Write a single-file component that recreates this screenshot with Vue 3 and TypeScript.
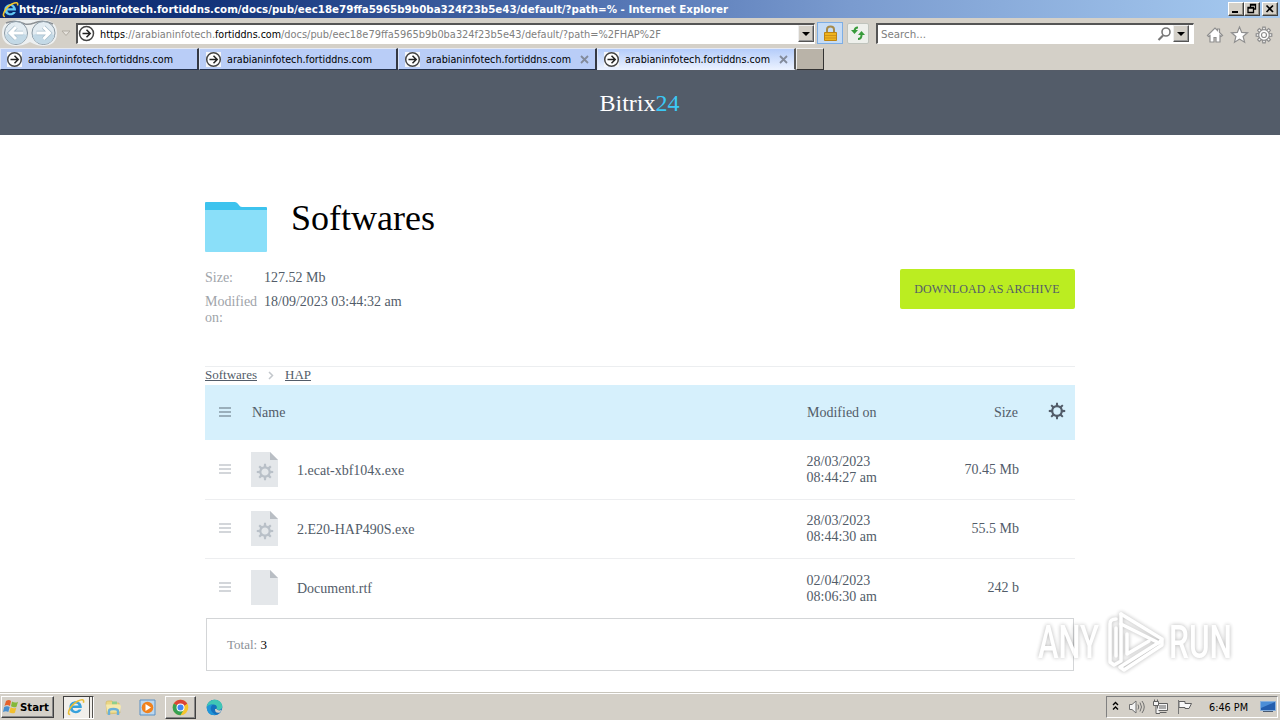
<script setup lang="ts">
import { h } from 'vue'

interface FitProps { text: string; w: number }

// A single line of text that always occupies exactly `w` pixels.
const FitText = (props: FitProps) =>
  h('svg', { width: props.w, height: 16, overflow: 'visible' }, [
    h('text', { x: 0, y: 12, textLength: props.w, lengthAdjust: 'spacingAndGlyphs', fill: 'currentColor' }, props.text),
  ])
FitText.props = ['text', 'w']

interface Tab { title: string; closable: boolean; active: boolean }
const host = 'arabianinfotech.fortiddns.com'
const tabs: Tab[] = [
  { title: host, closable: false, active: false },
  { title: host, closable: false, active: false },
  { title: host, closable: true, active: false },
  { title: host, closable: true, active: true },
]

interface FileRow { name: string; date: string; time: string; size: string; exe: boolean }
const files: FileRow[] = [
  { name: '1.ecat-xbf104x.exe', date: '28/03/2023', time: '08:44:27 am', size: '70.45 Mb', exe: true },
  { name: '2.E20-HAP490S.exe', date: '28/03/2023', time: '08:44:30 am', size: '55.5 Mb', exe: true },
  { name: 'Document.rtf', date: '02/04/2023', time: '08:06:30 am', size: '242 b', exe: false },
]
const teeth: number[] = [0, 45, 90, 135, 180, 225, 270, 315]
</script>

<template>
  <div class="screen">
    <header class="titlebar">
      <svg class="ie" width="17" height="17" viewBox="0 0 17 17">
        <path d="M14 9.400H5.400c.2 3.200 4.200 3.600 5.600 1.500h2.800c-2 5.200-11.500 4.500-11.500-2.300 0-7 12-7.800 11.700.8zM5.400 7.200h5.500c-.4-2.800-4.800-2.800-5.500 0z" fill="#62c8f5" />
        <path d="M3 15.500C-.8 16 2.500 7 10 3c4-2 6.500-2 5.500 1.500" fill="none" stroke="#f4c72d" stroke-width="1.500" />
      </svg>
      <FitText class="title" text="https://arabianinfotech.fortiddns.com/docs/pub/eec18e79ffa5965b9b0ba324f23b5e43/default/?path=% - Internet Explorer" :w="709" />
      <div class="winbtns">
        <span class="btn"><svg width="14" height="12"><path d="M3 9h6" stroke="#000" stroke-width="2" /></svg></span>
        <span class="btn"><svg width="14" height="12"><path d="M5.500 4V1.500h5V6H9M3 4.500h5.500v5H3zM5 2h6M3 5h6" fill="none" stroke="#000" stroke-width="1.300" /></svg></span>
        <span class="btn last"><svg width="14" height="12"><path d="M3.500 2.500l6.500 6.500M10 2.500L3.500 9" stroke="#000" stroke-width="1.700" /></svg></span>
      </div>
    </header>

    <div class="toolbar">
      <svg class="nav" width="72" height="30" viewBox="0 0 72 30">
        <path d="M15 2H44q13 1 13 13T44 28q-7 0-14-4-7 4-15 4Q2 27 2 15T15 2z" fill="#edf0f1" />
        <path d="M6 5q9-4 19 1 4 1 9-1 9-4 19 1" fill="none" stroke="#8d9195" stroke-width="1.500" />
        <g stroke="#8b9aa5">
          <circle cx="16" cy="15" r="11.500" fill="#e3ecf2" /><circle cx="43.500" cy="15" r="11.500" fill="#e3ecf2" />
        </g>
        <path d="M5 17q11-4 22 0-2 9-11 9T5 17zM32.500 17q11-4 22 0-2 9-11 9t-11-9z" fill="#c3d9e6" />
        <path d="M23 15H10m6-6l-6 6 6 6M36.500 15h13m-6-6l6 6-6 6" fill="none" stroke="#a9bfcd" stroke-width="4.500" />
        <path d="M23 15H10m6-6l-6 6 6 6M36.500 15h13m-6-6l6 6-6 6" fill="none" stroke="#fff" stroke-width="3" />
        <path d="M62 13h8l-4 4.500z" fill="#e5e2dc" stroke="#b1aca3" />
      </svg>
      <div class="address">
        <svg class="site" width="17" height="17" viewBox="0 0 17 17"><circle cx="8.500" cy="8.500" r="7" fill="#fff" stroke="#444" stroke-width="1.500" /><path d="M4.500 8.500h8M8.500 4.800l3.700 3.700-3.700 3.700" fill="none" stroke="#222" stroke-width="1.500" /></svg>
        <FitText class="dark" text="https" :w="25" />
        <FitText text="://arabianinfotech." :w="90" />
        <FitText class="dark" text="fortiddns.com" :w="66" />
        <FitText text="/docs/pub/eec18e79ffa5965b9b0ba324f23b5e43/default/?path=%2FHAP%2F" :w="380" />
        <span class="drop"></span>
      </div>
      <span class="tool lock">
        <svg width="15" height="17" viewBox="0 0 15 17"><path d="M4 8V4.500q0-3 3.500-3t3.500 3V8" fill="none" stroke="#a68b4b" stroke-width="2" /><path d="M1.500 7.500h12v8h-12z" fill="#efb41d" stroke="#bd8413" /><path d="M2 10.500h11M2 13h11" stroke="#cf911a" /></svg>
      </span>
      <span class="tool">
        <svg width="16" height="16" viewBox="0 0 16 16" fill="none" stroke="#389b3b" stroke-width="2"><path d="M8 2.500q-3.500 0-3.500 4" /><path d="M1 5h7L4.500 9z" fill="#389b3b" stroke="none" /><path d="M8 14q3.500 0 3.500-4" /><path d="M8 10h7l-3.500-4z" fill="#389b3b" stroke="none" /></svg>
      </span>
      <div class="search">
        <FitText text="Search..." :w="45" />
        <svg class="glass" width="15" height="16" viewBox="0 0 15 16" fill="none" stroke="#777"><circle cx="9" cy="6" r="4" stroke-width="1.600" /><path d="M6 9.500L1.500 14" stroke-width="2.200" /></svg>
        <span class="drop"></span>
      </div>
      <svg class="cmds" width="70" height="20" viewBox="0 0 70 20" fill="#fff" stroke="#8e8e8e" stroke-width="1.200">
        <path d="M1.500 10.500L9 3l2.500 2.500V4h2v3.500l3 3-1.500 1-1-1V17h-4v-4.500H8V17H4v-6.500l-1.500 1z" />
        <path d="M33.500 2l2.200 5.400 5.800.4-4.400 3.700 1.500 5.700-5.100-3.100-5 3.100 1.400-5.700-4.400-3.700 5.800-.4z" />
        <g transform="translate(58 10)">
          <path v-for="a in teeth" :key="a" :transform="`rotate(${a})`" d="M-1.500-5l.3-2.800h2.400l.3 2.800" />
          <circle r="5.300" /><circle r="2.500" />
        </g>
      </svg>
    </div>

    <nav class="tabs">
      <div v-for="(tab, i) in tabs" :key="i" class="tab" :class="{ active: tab.active }">
        <svg class="site" width="17" height="17" viewBox="0 0 17 17"><path d="M1 1h15v15H1z" fill="#f4f6fb" /><circle cx="8.500" cy="8.500" r="6.800" fill="#fff" stroke="#444" stroke-width="1.500" /><path d="M4.500 8.500h8M8.500 4.800l3.700 3.700-3.700 3.700" fill="none" stroke="#222" stroke-width="1.500" /></svg>
        <FitText :text="tab.title" :w="145" />
        <svg v-if="tab.closable" class="close" width="9" height="9"><path d="M1 1l7 7M8 1L1 8" stroke="#838b9b" stroke-width="1.800" /></svg>
      </div>
      <div class="newtab"></div>
    </nav>

    <main class="page">
      <div class="brand"><span>Bitrix</span><span class="num">24</span></div>

      <div class="content">
        <div class="heading">
          <svg width="62" height="50" viewBox="0 0 62 50"><path d="M0 1q0-1 1-1h29q2 0 3.500 2.500T37 5h24q1 0 1 1v5H0z" fill="#3dc3ee" /><path d="M0 8h62v41q0 1-1 1H1q-1 0-1-1z" fill="#8adff9" /></svg>
          <h1>Softwares</h1>
        </div>

        <div class="info">
          <dl>
            <dt>Size:</dt><dd>127.52 Mb</dd>
            <dt>Modified on:</dt><dd>18/09/2023 03:44:32 am</dd>
          </dl>
          <button class="download">DOWNLOAD AS ARCHIVE</button>
        </div>

        <div class="crumbs">
          <a>Softwares</a>
          <svg width="6" height="9"><path d="M1 1l3.500 3.500L1 8" fill="none" stroke="#c3c7cc" stroke-width="1.500" /></svg>
          <a>HAP</a>
        </div>

        <div class="row head">
          <i class="burger"></i>
          <span class="hname">Name</span>
          <span class="date">Modified on</span>
          <span class="size">Size</span>
          <svg class="gear" width="18" height="18" viewBox="-9 -9 18 18">
            <path v-for="a in teeth" :key="a" :transform="`rotate(${a})`" d="M-1.200-5l.3-3.200H.9l.3 3.200z" fill="#525c69" />
            <circle r="4.800" fill="none" stroke="#525c69" stroke-width="2.200" />
          </svg>
        </div>
        <div v-for="f in files" :key="f.name" class="row file-row">
          <i class="burger"></i>
          <svg class="file" width="27" height="35" viewBox="0 0 27 35">
            <path d="M0 0h19l8 8v27H0z" fill="#e4e7ea" /><path d="M19 0l8 8h-8z" fill="#b9bec4" />
            <g v-if="f.exe" transform="translate(14 20)">
              <path v-for="a in teeth" :key="a" :transform="`rotate(${a})`" d="M-1.300-5l.3-3.200H1l.3 3.200z" fill="#b9c0c8" />
              <circle r="4.700" fill="none" stroke="#b9c0c8" stroke-width="2.200" />
            </g>
          </svg>
          <span class="name">{{ f.name }}</span>
          <span class="date">{{ f.date }}<br />{{ f.time }}</span>
          <span class="size">{{ f.size }}</span>
        </div>
        <div class="total">Total: <b>{{ files.length }}</b></div>
      </div>

      <svg class="watermark" width="245" height="76" viewBox="0 0 245 76">
        <g fill="#fff">
          <text x="8" y="48" textLength="61" lengthAdjust="spacingAndGlyphs">ANY</text>
          <text x="139" y="48" textLength="63" lengthAdjust="spacingAndGlyphs">RUN</text>
        </g>
        <g fill="none" stroke="#fff" stroke-width="3.500" stroke-linejoin="round" stroke-linecap="round">
          <path d="M86 9q-6 0-6 5v38l4 3 7-4V4" />
          <path d="M86 18v28" />
          <path d="M91 4l41 25-3 4-38-19" />
          <path d="M97 24v20l22-13" />
          <path d="M132 30v5L94 60l-4-3 38-24" />
        </g>
      </svg>
    </main>

    <footer class="taskbar">
      <div class="start">
        <svg width="17" height="16" viewBox="0 0 17 16"><path d="M3 2q3-2 5 0L7 7Q4 5 1.500 7z" fill="#e5622b" /><path d="M9 2.500q3 2 6 .2l-1.500 5Q11 9 8 7.200z" fill="#84b83a" /><path d="M1.200 8Q4 6.500 6.700 8l-1.400 5Q3 11.500 0 13z" fill="#478fd0" /><path d="M7.700 8.300q3 1.700 5.600.4l-1.400 5q-3 1.300-5.600-.5z" fill="#f2bf2e" /></svg>
        <FitText text="Start" :w="29" />
      </div>
      <div class="pinned ieapp">
        <svg width="20" height="18" viewBox="0 0 17 17">
          <path d="M14 9.400H5.400c.2 3.200 4.200 3.600 5.600 1.500h2.800c-2 5.200-11.500 4.500-11.500-2.300 0-7 12-7.800 11.700.8zM5.400 7.200h5.500c-.4-2.800-4.800-2.800-5.500 0z" fill="#36a1dc" />
          <path d="M3 15.500C-.8 16 2.500 7 10 3c4-2 6.500-2 5.500 1.500" fill="none" stroke="#e9bd35" stroke-width="1.500" />
        </svg>
        <i></i><i></i>
      </div>
      <svg class="explorer" width="17" height="17" viewBox="0 0 17 17"><path d="M1 4q0-2 2-2h4l1 2h6l1 10-13 1z" fill="#ead685" stroke="#d1b65a" stroke-width=".6" /><path d="M7 2.500h5v3H7z" fill="#8fcf8b" /><path d="M1 5.500h14l1 2-1 5H2z" fill="#f5e9ac" /><path d="M4 16v-4q0-2 4.500-2t4.500 2v4" fill="none" stroke="#69b0d8" stroke-width="2.400" /></svg>
      <svg class="media" width="17" height="17" viewBox="0 0 17 17"><path d="M1 1h15v15H1z" fill="#bcd7ee" stroke="#5b91c5" /><circle cx="8.500" cy="8.500" r="5.800" fill="#f0821e" /><path d="M6.500 5l5.500 3.500L6.500 12z" fill="#fff" /></svg>
      <div class="pinned chrome">
        <svg width="17" height="17" viewBox="-8.500 -8.500 17 17"><circle r="7.800" fill="#f6c52c" /><path d="M0 0L-6.750-3.900A7.800 7.800 0 0 1 6.750-3.900z" fill="#db4437" /><path d="M0 0L-6.750-3.900A7.800 7.800 0 0 0 0 7.800L3.400 2z" fill="#36a152" /><path d="M-4-3.900H6.750L0 1z" fill="#db4437" /><circle r="4" fill="#fff" /><circle r="3" fill="#4285f4" /></svg>
      </div>
      <svg class="edge" width="17" height="17" viewBox="0 0 17 17"><circle cx="8.500" cy="8.500" r="7.800" fill="#1570bd" /><path d="M.8 7.500C2-1.500 16-1.500 16.300 7.500c0 4-5 4-6 2.500 1.500-2 0-4.500-3-4.500-3 0-5.500 1-6.500 3z" fill="#40c6b5" /><path d="M.7 9q1-4 6-3.500Q3 9 6 13q2 2 4 2.500Q2 18 .7 9z" fill="#2196d8" /><path d="M10.300 10q2 2.500 5.500.8L14 13.500q-5 1.500-5-3.500z" fill="#d4d0c8" /></svg>

      <div class="tray">
        <svg class="more" width="7" height="10" viewBox="0 0 7 10" fill="none" stroke="#000" stroke-width="1.400"><path d="M1 4l2.500-2.500L6 4M1 8.500L3.500 6 6 8.500" /></svg>
        <svg class="sound" width="18" height="16" viewBox="0 0 18 16" fill="none" stroke="#707070"><path d="M1.500 5.500H4L8 2v12l-4-3.500H1.500z" fill="#f4f4f4" /><path d="M10 5.500q1.500 2.500 0 5M12 3.500q3 4.500 0 9M14 2q4.500 6 0 12" /></svg>
        <svg class="net" width="17" height="16" viewBox="0 0 17 16" fill="#f4f4f4" stroke="#606060"><path d="M5.500 4.500h10v7h-10zM7.500 13.500h7" /><path d="M7 6h7v4H7z" fill="#aaa" stroke="none" /><path d="M1.500 2.500h5v4h-5zM2.500.5v2M5.500.5v2M4 6.500v8h4" /></svg>
        <svg class="flag" width="17" height="16" viewBox="0 0 17 16" fill="#f8f8f8" stroke="#606060"><path d="M3 2.500h6v2h6.500L13 9.500H9v-1H3z" /><path d="M2.500 1v14" stroke="#777" /></svg>
        <FitText class="clock" text="6:46 PM" :w="39" />
        <svg class="desk" width="16" height="14" viewBox="0 0 16 14"><path d="M.5 1.500h15v9H.5z" fill="#245eae" stroke="#86afdc" /><path d="M1 2h14L1 8z" fill="#4c8ed7" /><path d="M3 11.500h10" stroke="#4b5b71" /></svg>
      </div>
    </footer>
  </div>
</template>

<style>
html, body { margin: 0; overflow: hidden; }
</style>

<style scoped>
* { box-sizing: border-box; }
svg { display: block; flex: none; }
.screen { width: 1280px; height: 720px; overflow: hidden; display: flex; flex-direction: column; background: #fff; font: 11px "DejaVu Sans Condensed", "DejaVu Sans", sans-serif; color: #000; }
.titlebar { height: 18px; flex: none; display: flex; align-items: center; padding-left: 2px; background: linear-gradient(90deg, #0b276c 0, #14357b 220px, #5273b2 600px, #7a9bcf 850px, #a6caf0 1270px); }
.title { color: #fff; font-weight: bold; font-family: "DejaVu Sans", sans-serif; }
.winbtns { margin-left: auto; padding-right: 2px; display: flex; }
.btn { width: 16px; height: 14px; background: #d4d0c8; border: 1px solid; border-color: #fff #404040 #404040 #fff; box-shadow: inset -1px -1px #929087; }
.btn.last { margin-left: 2px; }
.toolbar { height: 30px; flex: none; display: flex; align-items: center; background: #d4d0c8; }
.address, .search { height: 21px; display: flex; align-items: center; background: #fff; border: solid #fff; border-width: 2px 1px 1px 2px; border-top-color: #555; border-left-color: #555; color: #808080; }
.address { width: 739px; margin-left: 4px; padding-left: 0; }
.address .site { margin-right: 5px; }
.address .dark { color: #000; }
.drop { width: 16px; height: 17px; margin-left: auto; display: grid; place-items: center; background: #d4d0c8; border: 1px solid; border-color: #eee #555 #555 #eee; box-shadow: inset -1px -1px #999; }
.drop::after { content: ""; border: 4px solid transparent; border-top-color: #000; border-bottom: 0; }
.tool { width: 22px; height: 21px; margin-left: 8px; display: grid; place-items: center; background: #eef0ec; border: 1px solid #c0c4bd; border-radius: 2px; }
.tool.lock { width: 26px; margin-left: 2px; height: 22px; background: #c6dcf5; border-color: #7daee5; border-radius: 0; }
.tool.lock + .tool { margin-left: 4px; }
.search { width: 318px; margin-left: 7px; padding-left: 3px; padding-right: 4px; }
.glass { margin-left: auto; margin-right: 1px; }
.search .drop { margin-left: 0; }
.cmds { margin-left: 12px; position: relative; top: 2px; }
.tabs { height: 23px; flex: none; display: flex; background: #d4d0c8; border-bottom: 1px solid #555c68; }
.tab { width: 199px; height: 22px; display: flex; align-items: center; padding-left: 5px; background: #b9cdf7; border-right: 2px solid #343842; border-top: 1px solid #e5e9f3; border-bottom: 1px solid #25324c; border-left: 1px solid #dce5f8; }
.tab .site { margin-right: 5px; }
.tab .close { margin-left: 9px; }
.tab.active { background: linear-gradient(#b4ccfa, #eaf1ff); border-bottom-color: #eaf1ff; border-right-color: #555; }
.newtab { width: 28px; height: 22px; background: #b9b3a8; border: 1px solid #eee; border-right: 1px solid #333; border-bottom: 1px solid #333; }
.page { position: relative; height: 621px; flex: none; font-family: "Liberation Serif", serif; font-size: 14px; line-height: 16px; color: #525c69; }
.brand { height: 64px; display: flex; justify-content: center; align-items: center; padding-right: 1px; background: #535c69; color: #fff; font-size: 24px; }
.brand .num { color: #3bc8f5; }
.content { width: 870px; margin-left: 205px; padding-top: 67px; }
.heading { display: flex; height: 67px; }
h1 { margin: -4px 0 0 24px; font-size: 36px; line-height: 41px; font-weight: normal; color: #000; }
.info { display: flex; justify-content: space-between; height: 97px; }
dl { margin: 0; padding-top: 1px; display: grid; grid-template-columns: 59px auto; row-gap: 8px; align-content: start; }
dt { color: #a0a4aa; }
dd { margin: 0; }
.download { width: 175px; height: 40px; border: 0; padding: 0 1px 0 0; border-radius: 2px; background: #bbed21; color: #535c69; font: 12px "Liberation Serif", serif; letter-spacing: .08px; }
.crumbs { height: 19px; border-top: 1px solid #eceef0; padding-bottom: 2px; display: flex; align-items: center; font-size: 13px; }
.crumbs a { text-decoration: underline; }
.crumbs svg { margin: 0 11px; }
.row { height: 59px; display: flex; align-items: center; padding-left: 14px; }
.file-row { height: 60px; align-items: flex-start; padding-top: 12px; border-bottom: 1px solid #edeef0; }
.file-row + .file-row { height: 59px; padding-top: 11px; }
.file-row:nth-last-child(2) { border-bottom: 0; }
.row.head { height: 55px; background: #d6f0fc; }
.burger { width: 12px; height: 10px; flex: none; border: solid #d3d6da; border-width: 2px 0; position: relative; }
.file-row .burger { margin-top: 12px; }
.burger::after { content: ""; position: absolute; left: 0; right: 0; top: 2px; height: 2px; background: #d3d6da; }
.head .burger { border-color: #9aafbb; margin-top: -1px; }
.head .burger::after { background: #9aafbb; }
.hname { margin-left: 21px; width: 555px; }
.file { margin-left: 20px; }
.name { margin-left: 19px; width: 509.500px; padding-top: 11px; }
.date { width: 90.500px; padding-top: 2px; }
.head .date { padding-top: 0; width: 90px; }
.file-row:nth-last-child(2) .date { padding-top: 3px; }
.size { width: 122px; text-align: right; }
.file-row .size { padding-top: 10px; }
.head .size { width: 121px; }
.gear { margin-left: 30px; margin-top: -3px; }
.total { width: 868px; height: 53px; margin: 0 0 0 1px; border: 1px solid #d3d5d7; padding: 18px 0 0 20px; font-size: 13px; color: #8b9097; }
.total b { font-weight: normal; color: #000; }
.watermark { position: absolute; left: 1030px; top: 539px; filter: drop-shadow(0 0 2px rgba(0, 0, 0, .32)); opacity: .9; font: 500 47px Roboto, sans-serif; }
.taskbar { height: 28px; flex: none; display: flex; align-items: center; background: #d4d0c8; border-top: 1px solid #c8c5bc; box-shadow: inset 0 1px #fff; padding: 1px 2px 0 1px; }
.start { width: 53px; height: 22px; display: flex; align-items: center; padding-left: 1px; border: 1px solid; border-color: #fff #404040 #404040 #fff; box-shadow: inset -1px -1px #888; font-weight: bold; }
.pinned { height: 23px; display: flex; align-items: center; }
.ieapp { width: 31px; margin-left: 9px; padding-left: 2px; background: #f1efeb; border: 1px solid; border-color: #404040 #fff #fff #404040; gap: 1px; }
.ieapp i { width: 3px; height: 21px; border-right: 1px solid #55534f; }
.explorer { margin-left: 11px; }
.media { margin-left: 17px; }
.chrome { width: 31px; justify-content: center; margin-left: 9px; border: 1px solid; border-color: #fff #404040 #404040 #fff; box-shadow: inset -1px -1px #888; }
.edge { margin-left: 10px; }
.tray { width: 172px; height: 22px; margin-left: auto; display: flex; align-items: center; padding-left: 5px; border: 1px solid; border-color: #808080 #fff #fff #808080; }
.more { margin-top: -3px; }
.sound { margin-left: 9px; }
.net { margin-left: 6px; }
.flag { margin-left: 7px; }
.clock { margin-left: 16px; }
.desk { margin-left: 12px; }
</style>
